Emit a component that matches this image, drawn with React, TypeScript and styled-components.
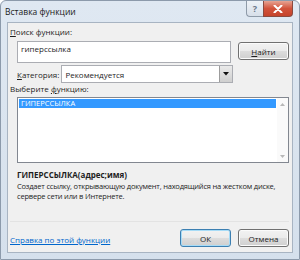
import React from 'react';
import styled, { createGlobalStyle } from 'styled-components';

const Global = createGlobalStyle`
  html, body { margin: 0; padding: 0; background: #fff; }
  body { font-family: "Open Sans", "Noto Sans", sans-serif; font-size: 8px; color: #1e1e1e; }
  * { box-sizing: border-box; }
`;

function App() {
  return (
    <>
      <Global />
      <Window>
        <TitleBar>
          <Title>Вставка функции</Title>
          <Caption>
            <HelpBtn>?</HelpBtn>
            <CloseBtn>
              <svg width="10" height="8" viewBox="0 0 10 8">
                <path d="M1.5 0.5 L8.5 7.5 M8.5 0.5 L1.5 7.5" stroke="#fff" strokeWidth="2" strokeLinecap="round" />
              </svg>
            </CloseBtn>
          </Caption>
        </TitleBar>
        <Panel>
          <Label><u>П</u>оиск функции:</Label>
          <SearchRow>
            <SearchBox>гиперссылка</SearchBox>
            <Button><u>Н</u>айти</Button>
          </SearchRow>
          <CategoryRow>
            <Label><u>К</u>атегория:</Label>
            <Select>
              <span>Рекомендуется</span>
              <DropArrow>
                <svg width="6" height="4" viewBox="0 0 6 4"><path d="M0 0 H6 L3 3.5 Z" fill="#111" /></svg>
              </DropArrow>
            </Select>
          </CategoryRow>
          <Label>Выберите <u>ф</u>ункцию:</Label>
          <ListBox>
            <Items>
              <Item $selected>ГИПЕРССЫЛКА</Item>
            </Items>
            <ScrollBar>
              <svg width="5" height="3" viewBox="0 0 5 3"><path d="M0 3 L2.5 0 L5 3 Z" fill="#b8b8b8" /></svg>
              <svg width="5" height="3" viewBox="0 0 5 3"><path d="M0 0 L2.5 3 L5 0 Z" fill="#b8b8b8" /></svg>
            </ScrollBar>
          </ListBox>
          <Signature>ГИПЕРССЫЛКА(адрес;имя)</Signature>
          <Description>
            Создает ссылку, открывающую документ, находящийся на жестком диске, сервере сети или в Интернете.
          </Description>
          <Separator />
          <Footer>
            <HelpLink>Справка по этой функции</HelpLink>
            <Buttons>
              <Button $default>ОК</Button>
              <Button>Отмена</Button>
            </Buttons>
          </Footer>
        </Panel>
      </Window>
    </>
  );
}

export default App;

const Window = styled.div`
  width: 300px;
  height: 260px;
  display: flex;
  flex-direction: column;
  background: linear-gradient(180deg, #dfe8f2 0%, #d5e0ec 100%);
  border: 1px solid #8c9aab;
  border-radius: 6px 6px 0 0;
`;

const TitleBar = styled.div`
  height: 21px;
  display: flex;
  align-items: flex-start;
  justify-content: space-between;
  padding-left: 4px;
`;

const Title = styled.div`
  padding-top: 5px;
  font-size: 8.5px;
  color: #1a1a1a;
`;

const Caption = styled.div`
  display: flex;
  margin-right: 6px;
`;

const HelpBtn = styled.div`
  width: 17px;
  height: 16px;
  display: flex;
  align-items: center;
  justify-content: center;
  border: 1px solid #8e9aa8;
  border-top: none;
  border-right: none;
  border-radius: 0 0 0 4px;
  background: linear-gradient(180deg, #eef2f7, #d7dfe9);
  color: #6b7787;
  font-size: 9px;
  font-weight: 700;
`;

const CloseBtn = styled.div`
  width: 30px;
  height: 16px;
  display: flex;
  align-items: center;
  justify-content: center;
  border: 1px solid #8a4a3f;
  border-top: none;
  border-radius: 0 0 4px 0;
  background: linear-gradient(180deg, #e7a493 0%, #d2533b 50%, #c5432b 100%);
`;

const Panel = styled.div`
  flex: 1;
  margin: 0 6px 6px 6px;
  border: 1px solid #a8b4c2;
  background: #f0f0f0;
  display: flex;
  flex-direction: column;
  padding: 3px 3px 3px 2px;
`;

const Label = styled.div`
  font-size: 8px;
  line-height: 11px;
  color: #1e1e1e;
  white-space: nowrap;
  u { text-decoration: underline; }
`;

const SearchRow = styled.div`
  display: flex;
  align-items: flex-start;
  gap: 7px;
  margin: 4px 0 0 7px;
`;

const SearchBox = styled.div`
  flex: 1;
  height: 22px;
  background: #fff;
  border: 1px solid #abadb3;
  padding: 1px 3px;
  font-size: 8px;
  line-height: 11px;
`;

const Button = styled.div<{ $default?: boolean }>`
  width: 51px;
  height: 18px;
  display: flex;
  align-items: center;
  justify-content: center;
  margin-top: 1px;
  border: 1px solid ${p => (p.$default ? '#3c7fb1' : '#707070')};
  border-radius: 3px;
  background: linear-gradient(180deg, #f2f2f2 0%, #ebebeb 50%, #dddddd 51%, #cfcfcf 100%);
  box-shadow: inset 0 0 0 1px ${p => (p.$default ? '#a7dcf7' : '#fbfbfb')};
  font-size: 8px;
  color: #1e1e1e;
`;

const CategoryRow = styled.div`
  display: flex;
  align-items: center;
  gap: 2px;
  margin: 2px 0 0 7px;
  width: 216px;
`;

const Select = styled.div`
  flex: 1;
  height: 18px;
  background: #fff;
  border: 1px solid #abadb3;
  display: flex;
  align-items: center;
  justify-content: space-between;
  padding-left: 3px;
  font-size: 8px;
`;

const DropArrow = styled.div`
  width: 13px;
  height: 16px;
  display: flex;
  align-items: center;
  justify-content: center;
  background: linear-gradient(180deg, #eaeaea, #cfcfcf);
  border-left: 1px solid #9c9c9c;
`;

const ListBox = styled.div`
  margin: 3px 0 0 7px;
  height: 66px;
  background: #fff;
  border: 1px solid #828790;
  display: flex;
`;

const Items = styled.div`
  flex: 1;
  padding: 1px;
`;

const Item = styled.div<{ $selected?: boolean }>`
  height: 9px;
  line-height: 9px;
  padding-left: 2px;
  font-size: 7.5px;
  background: ${p => (p.$selected ? '#3399ff' : 'transparent')};
  color: ${p => (p.$selected ? '#fff' : '#1e1e1e')};
`;

const ScrollBar = styled.div`
  width: 11px;
  display: flex;
  flex-direction: column;
  justify-content: space-between;
  align-items: center;
  padding: 5px 0 4px;
  background: #fafafa;
`;

const Signature = styled.div`
  margin: 6px 0 0 7px;
  font-weight: 700;
  font-size: 8px;
  line-height: 11px;
`;

const Description = styled.div`
  margin: 1px 0 0 7px;
  font-size: 7.5px;
  line-height: 10px;
  letter-spacing: -0.2px;
`;

const Separator = styled.div`
  margin-top: auto;
  height: 1px;
  background: #e3e3e3;
`;

const Footer = styled.div`
  display: flex;
  align-items: center;
  justify-content: space-between;
  padding: 6px 0 2px;
`;

const HelpLink = styled.a`
  color: #0066cc;
  text-decoration: underline;
  font-size: 8px;
  margin-top: 3px;
`;

const Buttons = styled.div`
  display: flex;
  gap: 7px;
`;
